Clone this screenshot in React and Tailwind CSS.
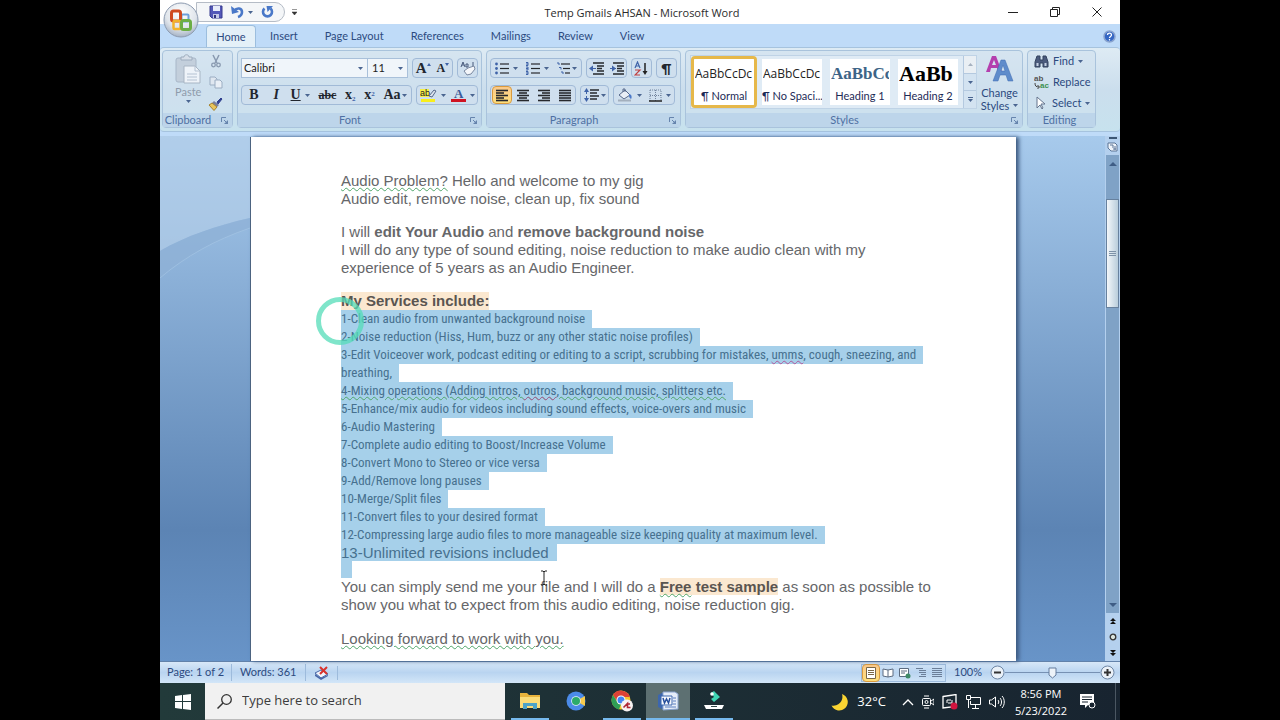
import { clsx } from 'clsx';
import { twMerge } from 'tailwind-merge';

const lineRows = {
  left: [12, 8, 12, 8, 12],
  center: [12, 8, 12, 8, 12],
  right: [12, 8, 12, 8, 12],
  justify: [12, 12, 12, 12, 12],
};

function Icon({ w = 16, h = 16, children, className }) {
  return (
    <svg width={w} height={h} viewBox={`0 0 ${w} ${h}`} fill="none" className={clsx('shrink-0', className)} aria-hidden="true">
      {children}
    </svg>
  );
}

function Caret({ className }) {
  return (
    <Icon w={5} h={3} className={className}>
      <path d="M0 0h5L2.5 3z" fill="#4a6591" />
    </Icon>
  );
}

function OfficeLogo() {
  return (
    <svg width="38" height="38" viewBox="0 0 38 38" aria-hidden="true">
      <defs>
        <radialGradient id="orb" cx="0.5" cy="0.3" r="0.75">
          <stop offset="0" stopColor="#ffffff" />
          <stop offset="0.6" stopColor="#e0e5eb" />
          <stop offset="1" stopColor="#9aa9bd" />
        </radialGradient>
      </defs>
      <circle cx="19" cy="19" r="17" fill="url(#orb)" stroke="#8d9bb0" />
      <g fill="none">
        <rect x="19.500" y="13.500" width="7" height="7" rx="1" stroke="#6d9fdb" strokeWidth="2" />
        <rect x="9.500" y="10" width="9" height="10" rx="2" stroke="#cf4a20" strokeWidth="3" />
        <rect x="11.500" y="20" width="7" height="8" rx="1" stroke="#f2b32c" strokeWidth="2.500" />
        <rect x="19.500" y="19.500" width="9" height="9" rx="2" stroke="#6cae45" strokeWidth="3" />
      </g>
    </svg>
  );
}

function SaveIcon() {
  return (
    <Icon w={14} h={14}>
      <path d="M1 1h12v12H3l-2-2z" fill="#5458b8" stroke="#373a8e" />
      <path d="M4 1h7v5H4z" fill="#e8ecfa" />
      <path d="M4 9h6v4H4z" fill="#c5c9e6" />
      <path d="M5 10h2v3H5z" fill="#32357f" />
    </Icon>
  );
}

function UndoIcon() {
  return (
    <Icon w={13} h={14}>
      <path d="M3 6c3-4 8-3 8 1 0 2-1 4-4 5" stroke="#4a78c8" strokeWidth="2.6" />
      <path d="M0 1l1 8 7-2z" fill="#4a78c8" />
    </Icon>
  );
}

function RedoIcon() {
  return (
    <Icon w={13} h={14}>
      <path d="M3.500 3.500a4.500 4.500 0 1 0 6 0" stroke="#4a78c8" strokeWidth="2.600" />
      <path d="M5.500 1H12l-5.500 6z" fill="#4a78c8" />
    </Icon>
  );
}

function PasteIcon() {
  return (
    <Icon w={26} h={30}>
      <rect x="1" y="4" width="20" height="24" rx="2" fill="#c3cfdc" stroke="#a8b7c8" />
      <path d="M6 6V3h3c0-3 5-3 5 0h3v3z" fill="#d6dfe9" stroke="#9dacbd" />
      <path d="M9 12h11l5 5v12H9z" fill="#eef3f9" stroke="#a8b5c4" />
      <path d="M20 12v5h5M12 20h10M12 23h10M12 26h10" stroke="#b5c2d2" />
    </Icon>
  );
}

function CutIcon() {
  return (
    <Icon w={12} h={14}>
      <path d="M3 1l4 8M9 1L5 9" stroke="#8899b0" strokeWidth="1.500" />
      <circle cx="3.500" cy="11" r="1.800" stroke="#8899b0" strokeWidth="1.300" />
      <circle cx="8.500" cy="11" r="1.800" stroke="#8899b0" strokeWidth="1.300" />
    </Icon>
  );
}

function CopyIcon() {
  return (
    <Icon w={14} h={13}>
      <path d="M1 1h5l2 2v6H1z" fill="#dfe7f0" stroke="#9badc2" />
      <path d="M6 4h5l2 2v6H6z" fill="#e9eff6" stroke="#9badc2" />
    </Icon>
  );
}

function BrushIcon() {
  return (
    <Icon w={15} h={14}>
      <path d="M9 5l4-4 1 1-4 5z" fill="#2f3f8f" stroke="#2f3f8f" />
      <path d="M6 4l5 4-2 2-5-4z" fill="#7a7f9c" />
      <path d="M1 8l3-2 5 4-3 3.500z" fill="#e9c55d" stroke="#a5812e" />
    </Icon>
  );
}

function Lines({ kind }) {
  return (
    <Icon w={14} h={13}>
      {lineRows[kind].map((len, i) => {
        const x = kind === 'right' ? 13 - len : kind === 'center' ? 7 - len / 2 : 1;
        return <path key={i} d={`M${x} ${1.5 + i * 2.5}h${len}`} stroke="#26282c" strokeWidth="1.6" />;
      })}
    </Icon>
  );
}

function ListIcon({ kind }) {
  return (
    <Icon w={14} h={13}>
      {[2, 6.5, 11].map((y, i) => (
        <g key={y}>
          <path d={`M${kind === 'multi' ? 4 + i * 2 : 5} ${y}h${kind === 'multi' ? 9 - i * 2 : 9}`} stroke="#26282c" strokeWidth="1.2" />
          {kind === 'bullet' && <circle cx="1.500" cy={y} r="1.400" fill="#3f63a8" />}
          {kind === 'number' && <path d={`M0 ${y - 1.5}h2v3h-2M0 ${y}h2`} stroke="#3f63a8" />}
          {kind === 'multi' && <path d={`M${i * 2} ${y - 1}h2v2`} stroke="#3f63a8" />}
        </g>
      ))}
    </Icon>
  );
}

function IndentIcon({ out }) {
  return (
    <Icon w={15} h={13}>
      <path d="M4 1h11M8 4h7M8 6.500h5M8 9h7M4 12h11" stroke="#26282c" strokeWidth="1.500" />
      <path d={out ? 'M0 6.500l4-3v6z' : 'M7 6.500l-4-3v6z'} fill="#3f63a8" />
      <path d="M1 6.500h6" stroke="#3f63a8" />
    </Icon>
  );
}

function SortIcon() {
  return (
    <Icon w={15} h={15}>
      <path d="M1 7l2.500-6L6 7M2 5h3" stroke="#3f63a8" strokeWidth="1.200" />
      <path d="M1 9h5l-5 5h5" stroke="#c04040" strokeWidth="1.200" />
      <path d="M11 2v9" stroke="#222" strokeWidth="1.500" />
      <path d="M8.500 10h5L11 14z" fill="#222" />
    </Icon>
  );
}

function SpacingIcon() {
  return (
    <Icon w={15} h={14}>
      <path d="M6 2h9M6 5h7M6 8h9M6 11h7" stroke="#26282c" strokeWidth="1.400" />
      <path d="M2.500 2v10" stroke="#3f63a8" strokeDasharray="4 2" />
      <path d="M0 4l2.500-4L5 4zM0 10h5l-2.500 4z" fill="#3f63a8" />
    </Icon>
  );
}

function BucketIcon() {
  return (
    <Icon w={16} h={14}>
      <path d="M2 7l6-5 5 5-6 4z" fill="#e8eef6" stroke="#56688a" />
      <path d="M6 4V1h2v3" stroke="#56688a" />
      <path d="M12 6c3 0 3 4 2 5-2-1-2-3-2-5z" fill="#4a78c8" />
      <path d="M1 12.500h13" stroke="#a3afbd" strokeWidth="2" />
    </Icon>
  );
}

function BorderIcon() {
  return (
    <Icon w={13} h={13}>
      <path d="M1 1h11v11M1 1v11M6.500 1v11M1 6.500h11" stroke="#71839c" strokeDasharray="1 1" />
      <path d="M0 12h13" stroke="#222" strokeWidth="1.500" />
    </Icon>
  );
}

function EraserIcon() {
  return (
    <Icon w={16} h={15}>
      <path d="M1 6l2-5 2 5M2 4h2M6 3v3h2V3zM13 1v5" stroke="#46587a" />
      <path d="M4 10l4-3 6-2 1 3-4 5-4 1z" fill="#f4f6fa" stroke="#7a88a0" />
    </Icon>
  );
}

function HighlightIcon() {
  return (
    <Icon w={17} h={15}>
      <path d="M0 1h9v8H0z" fill="#f5f04a" />
      <text x="0" y="8" fontSize="9" fontFamily="Liberation Sans" fill="#222">ab</text>
      <path d="M9 8l5-6 2 1-4 6z" fill="#dbe4ee" stroke="#56688a" />
      <path d="M1 12.500h14" stroke="#f8ee1c" strokeWidth="3" />
    </Icon>
  );
}

function FindIcon() {
  return (
    <Icon w={15} h={13}>
      <path d="M3 1h3v4h3V1h3l2 6v5H9V8H6v4H1V7z" fill="#4a5a7c" stroke="#33425f" />
      <path d="M2.500 8h2v3h-2zM10.500 8h2v3h-2z" fill="#c3d0e2" />
    </Icon>
  );
}

function ReplaceIcon() {
  return (
    <Icon w={15} h={14}>
      <text x="0" y="6" fontSize="8" fontWeight="700" fontFamily="Liberation Sans" fill="#555">ab</text>
      <text x="6" y="13" fontSize="8" fontWeight="700" fontFamily="Liberation Sans" fill="#3b9150">ac</text>
      <path d="M1 8c0 3 1 4 4 4M3.500 10l2 2-2 2" stroke="#444" />
    </Icon>
  );
}

function SelectIcon() {
  return (
    <Icon w={14} h={14}>
      <path d="M3 1v11l3-3 2 4 1-1-2-4h4z" fill="#fff" stroke="#65758e" />
    </Icon>
  );
}

function ChangeStylesIcon() {
  return (
    <Icon w={28} h={27}>
      <path d="M0 17L6 1h4l6 16h-4l-1-4H5l-1 4zM6 10h4L8 5z" fill="#b43fae" />
      <path d="M7 26L15 5h4l8 21h-5l-2-6h-6l-2 6zM15 16h4l-2-6z" fill="#5f8ccb" stroke="#3d6bb0" strokeWidth="0.500" />
    </Icon>
  );
}

function Launcher() {
  return (
    <Icon w={7} h={7}>
      <path d="M0.500 5V0.500H5M3 3l3 3" stroke="#6684ad" />
      <path d="M7 3v4H3z" fill="#6684ad" />
    </Icon>
  );
}

function Group({ label, launcher, className, children }) {
  return (
    <section className={clsx('flex flex-col rounded-sm border border-[#a9c3dc] bg-[#d0e1ef]/60', className)}>
      <div className="flex flex-1 flex-col">{children}</div>
      <div className="flex h-[14px] items-center bg-[#bdd5ea] pr-1 text-[#4e70a3]">
        <span className="flex-1 text-center text-[11px] leading-[14px]">{label}</span>
        {launcher && (
          <button aria-label={`${label} options`} className="ml-2">
            <Launcher />
          </button>
        )}
      </div>
    </section>
  );
}

function Tools({ className, children }) {
  return (
    <div className={clsx('flex h-5 shrink-0 items-center justify-around rounded-sm border border-[#a1bad7] bg-[#cfdfee]', className)}>
      {children}
    </div>
  );
}

function Tool({ label, drop, active, className, children }) {
  return (
    <button
      aria-label={label}
      className={twMerge(
        'flex h-[18px] items-center gap-1 px-0 leading-none text-[#22262e]',
        active && 'rounded-sm border border-[#d99a3e] bg-linear-to-b from-[#fbc98a] to-[#fddf7c]',
        className
      )}
    >
      {children}
      {drop && <Caret />}
    </button>
  );
}

function TitleBar() {
  return (
    <header className="relative flex h-6 items-center bg-white text-[#2b2b2b]">
      <button aria-label="Office" className="absolute top-[1px] left-[2px] z-10">
        <OfficeLogo />
      </button>
      <div className="ml-9 flex h-5 w-[89px] items-center gap-2 rounded-r-full border border-[#b5bcc6] bg-[#f4f6f8] pl-[12px]">
        <button aria-label="Save"><SaveIcon /></button>
        <button aria-label="Undo"><UndoIcon /></button>
        <Caret className="-ml-1" />
        <button aria-label="Redo"><RedoIcon /></button>
      </div>
      <button aria-label="Customize toolbar" className="ml-[7px]">
        <Icon w={5} h={6}>
          <path d="M0 0.500h5M0 3h5L2.500 6z" fill="#333" stroke="#333" strokeWidth="0.500" />
        </Icon>
      </button>
      <h1 className="absolute inset-x-0 pt-px pl-1 text-center font-['Open_Sans','Noto_Sans',sans-serif] text-[11px] leading-6">
        Temp Gmails AHSAN - Microsoft Word
      </h1>
      <div className="z-10 ml-auto flex items-center gap-8 pr-[18px]">
        <button aria-label="Minimize">
          <Icon w={10} h={10}><path d="M0 5.500h10" stroke="#222" /></Icon>
        </button>
        <button aria-label="Restore">
          <Icon w={10} h={10}><path d="M0.500 2.500h7v7h-7zM2.500 2.500v-2h7v7h-2" stroke="#222" /></Icon>
        </button>
        <button aria-label="Close">
          <Icon w={10} h={10}><path d="M0.500 0.500l9 9M9.500 0.500l-9 9" stroke="#222" /></Icon>
        </button>
      </div>
    </header>
  );
}

const tabs = ['Insert', 'Page Layout', 'References', 'Mailings', 'Review', 'View'];

function TabBar() {
  return (
    <nav className="flex h-[23px] items-end bg-[#bfdbf8] pl-[46px] text-[11px] leading-5 text-[#2c4a7f]">
      <button className="h-[22px] w-[50px] rounded-t-sm border border-b-0 border-[#9cbede] bg-[#e4f0f8]">Home</button>
      <div className="flex h-[22px] items-center gap-[27px] pl-[14px]">
        {tabs.map((t) => (
          <button key={t}>{t}</button>
        ))}
      </div>
      <button aria-label="Help" className="mr-1 mb-1 ml-auto">
        <Icon w={13} h={13}>
          <circle cx="6.500" cy="6.500" r="5.500" fill="#3567c4" stroke="#8aa4cf" strokeWidth="1.500" />
          <path d="M4.500 5c0-2.500 4-2.500 4 0 0 1.500-2 1.500-2 3M6.500 9v1.500" stroke="#fff" strokeWidth="1.300" />
        </Icon>
      </button>
    </nav>
  );
}

const styleCards = [
  { name: '¶ Normal', look: 'text-[12px] text-[#222]', sample: 'AaBbCcDc', active: true },
  { name: '¶ No Spaci...', look: 'text-[12px] text-[#222]', sample: 'AaBbCcDc' },
  { name: 'Heading 1', look: 'text-[17px] font-bold text-[#3d6487]', sample: 'AaBbCc', serif: true },
  { name: 'Heading 2', look: 'text-center text-[22px] font-bold text-black', sample: 'AaBb', serif: true },
];

function Ribbon() {
  return (
    <div className="flex h-[85px] gap-1 rounded-sm border-y border-[#a6c3de] bg-linear-to-b from-[#deebf4] via-[#cbdeed] to-[#c7e2ee] px-[2px] pt-[2px] pb-[3px] text-[11px] text-[#2c4a7f]">
      <Group label="Clipboard" launcher className="w-[71px]">
        <div className="flex justify-between pt-[3px] pr-[9px] pl-[12px]">
          <button className="flex flex-col items-center text-[#8f9bab]">
            <PasteIcon />
            <span className="leading-4">Paste</span>
            <Caret />
          </button>
          <div className="flex flex-col items-center gap-2">
            <button aria-label="Cut"><CutIcon /></button>
            <button aria-label="Copy"><CopyIcon /></button>
            <button aria-label="Format Painter"><BrushIcon /></button>
          </div>
        </div>
      </Group>

      <Group label="Font" launcher className="w-[245px]">
        <div className="flex gap-1 px-[3px] pt-[7px]">
          <div className="flex h-5 w-[167px] border border-[#a9c0da] bg-[#f0f5fa] text-[#222]">
            <label className="flex min-w-0 flex-1 items-center pr-1">
              <input aria-label="Font" className="w-full min-w-0 bg-transparent pl-[2px] outline-none" defaultValue="Calibri" />
              <Caret />
            </label>
            <label className="flex w-10 items-center border-l border-[#a9c0da] pr-1">
              <input aria-label="Font size" className="w-full min-w-0 bg-transparent pl-1 outline-none" defaultValue="11" />
              <Caret />
            </label>
          </div>
          <Tools className="w-[41px] font-['Liberation_Serif',serif] font-bold">
            <Tool label="Grow Font" className="text-[15px]">A<Icon w={4} h={10} className="-ml-1"><path d="M0 3h4L2 0z" fill="#3f63a8" /></Icon></Tool>
            <Tool label="Shrink Font" className="text-[12px]">A<Icon w={4} h={10} className="-ml-1"><path d="M0 0h4L2 3z" fill="#3f63a8" /></Icon></Tool>
          </Tools>
          <Tools className="w-[21px]">
            <Tool label="Clear Formatting"><EraserIcon /></Tool>
          </Tools>
        </div>
        <div className="flex gap-1 px-[3px] pt-[7px]">
          <Tools className="w-[171px] font-['Liberation_Serif',serif] text-[14px]">
            <Tool label="Bold" className="px-[3px] font-bold">B</Tool>
            <Tool label="Italic" className="px-[3px] font-bold italic">I</Tool>
            <Tool label="Underline" drop className="font-bold"><span className="underline">U</span></Tool>
            <Tool label="Strikethrough" className="text-[12px] font-bold"><span className="line-through">abc</span></Tool>
            <Tool label="Subscript" className="font-bold"><span>x<sub className="text-[7px] text-[#3f63a8]">2</sub></span></Tool>
            <Tool label="Superscript" className="font-bold"><span>x<sup className="text-[7px] text-[#3f63a8]">2</sup></span></Tool>
            <Tool label="Change Case" drop className="gap-px font-bold">Aa</Tool>
          </Tools>
          <Tools className="w-[62px]">
            <Tool label="Highlight" drop><HighlightIcon /></Tool>
            <Tool label="Font Color" drop>
              <Icon w={15} h={15}>
                <text x="3" y="10" fontSize="13" fontWeight="700" fontFamily="Liberation Serif" fill="#3b5998">A</text>
                <path d="M0 12.500h15" stroke="#cf1322" strokeWidth="3" />
              </Icon>
            </Tool>
          </Tools>
        </div>
      </Group>

      <Group label="Paragraph" launcher className="w-[195px]">
        <div className="flex justify-between px-[3px] pt-[7px]">
          <Tools className="w-[92px]">
            <Tool label="Bullets" drop><ListIcon kind="bullet" /></Tool>
            <Tool label="Numbering" drop><ListIcon kind="number" /></Tool>
            <Tool label="Multilevel List" drop className="gap-px"><ListIcon kind="multi" /></Tool>
          </Tools>
          <Tools className="w-[41px]">
            <Tool label="Decrease Indent"><IndentIcon out /></Tool>
            <Tool label="Increase Indent"><IndentIcon /></Tool>
          </Tools>
          <Tools className="w-[21px]">
            <Tool label="Sort"><SortIcon /></Tool>
          </Tools>
          <Tools className="w-[21px]">
            <Tool label="Show marks" className="text-[14px] font-bold">¶</Tool>
          </Tools>
        </div>
        <div className="flex gap-1 px-[3px] pt-[7px]">
          <Tools className="w-[86px]">
            <Tool label="Align Left" active className="px-[2px]"><Lines kind="left" /></Tool>
            <Tool label="Center" className="px-[3px]"><Lines kind="center" /></Tool>
            <Tool label="Align Right" className="px-[3px]"><Lines kind="right" /></Tool>
            <Tool label="Justify" className="px-[3px]"><Lines kind="justify" /></Tool>
          </Tools>
          <Tools className="w-[29px]">
            <Tool label="Line Spacing" drop className="gap-[2px]"><SpacingIcon /></Tool>
          </Tools>
          <Tools className="w-[62px]">
            <Tool label="Shading" drop><BucketIcon /></Tool>
            <Tool label="Borders" drop><BorderIcon /></Tool>
          </Tools>
        </div>
      </Group>

      <Group label="Styles" launcher className="w-[338px]">
        <div className="flex pt-1 pl-1">
          <div className="flex h-[54px] items-center gap-[2px] border border-[#bfd3e6] bg-[#dfebf5]">
            {styleCards.map((s) => (
              <button
                key={s.name}
                className={clsx(
                  'flex h-[52px] w-[66px] flex-col items-center overflow-hidden border-[3px]',
                  s.active ? 'rounded-sm border-[#e6b84a]' : 'border-transparent'
                )}
              >
                <span className="flex h-[46px] w-full flex-col bg-white">
                  <span
                    className={clsx(
                      'mx-px h-[29px] overflow-hidden text-left leading-[30px] whitespace-nowrap',
                      s.serif ? "font-['Liberation_Serif',serif]" : "font-['Open_Sans',sans-serif]",
                      s.look
                    )}
                  >
                    {s.sample}
                  </span>
                  <span className="text-[11px] leading-4 whitespace-nowrap text-[#1e2b57]">{s.name}</span>
                </span>
              </button>
            ))}
            <div className="flex h-full w-[13px] flex-col divide-y divide-[#b4c9df] border-l border-[#b4c9df] bg-[#d3e3f1]">
              <button aria-label="Scroll up" className="flex flex-1 items-center justify-center bg-[#e9eff4]">
                <Icon w={5} h={3}><path d="M0 3h5L2.500 0z" fill="#a5b1bf" /></Icon>
              </button>
              <button aria-label="Scroll down" className="flex flex-1 items-center justify-center"><Caret /></button>
              <button aria-label="More styles" className="flex flex-1 flex-col items-center justify-center gap-px">
                <span className="h-px w-[5px] bg-[#4a6591]" />
                <Caret />
              </button>
            </div>
          </div>
          <button className="flex flex-1 flex-col items-center leading-[13px]">
            <ChangeStylesIcon />
            <span className="pt-1">Change</span>
            <span className="flex items-center gap-1">Styles <Caret /></span>
          </button>
        </div>
      </Group>

      <Group label="Editing" className="w-[69px]">
        <div className="flex flex-col items-start gap-[5px] pt-[2px] pl-[6px] leading-4">
          <button className="flex items-center gap-1"><FindIcon />Find <Caret /></button>
          <button className="flex items-center gap-1"><ReplaceIcon />Replace</button>
          <button className="flex items-center gap-1"><SelectIcon />Select <Caret /></button>
        </div>
      </Group>
    </div>
  );
}

const services = [
  '1-Clean audio from unwanted background noise',
  '2-Noise reduction (Hiss, Hum, buzz or any other static noise profiles)',
  <>3-Edit Voiceover work, podcast editing or editing to a script, scrubbing for mistakes, <Spell>umms</Spell>, cough, sneezing, and</>,
  'breathing,',
  <Grammar key="mix">4-Mixing operations (Adding intros, <Spell>outros</Spell>, background music, splitters etc.</Grammar>,
  '5-Enhance/mix audio for videos including sound effects, voice-overs and music',
  '6-Audio Mastering',
  '7-Complete audio editing to Boost/Increase Volume',
  '8-Convert Mono to Stereo or vice versa',
  '9-Add/Remove long pauses',
  '10-Merge/Split files',
  '11-Convert files to your desired format',
  '12-Compressing large audio files to more manageable size keeping quality at maximum level.',
];

function Grammar({ children }) {
  return <span className="underline decoration-[#4fa66a] decoration-wavy decoration-1 underline-offset-1">{children}</span>;
}

function Spell({ children }) {
  return <span className="underline decoration-[#b0579a] decoration-wavy decoration-1 underline-offset-1">{children}</span>;
}

function Page() {
  return (
    <article className="h-full flex-1 overflow-hidden border-l border-[#4c6380] bg-white pt-[35px] pl-[90px] font-['Liberation_Sans',Arial,sans-serif] text-[15px] leading-[18px] whitespace-nowrap text-[#66676a] shadow-[3px_0_4px_#3d5a80]">
      <p><Grammar>Audio Problem?</Grammar> Hello and welcome to my gig</p>
      <p>Audio edit, remove noise, clean up, fix sound</p>
      <p className="pt-[15px]">I will <b>edit Your Audio</b> and <b>remove background noise</b></p>
      <p>I will do any type of sound editing, noise reduction to make audio clean with my</p>
      <p>experience of 5 years as an Audio Engineer.</p>
      <div className="relative pt-[15px]">
        <h2 className="w-fit bg-[#fbe8d0] font-bold text-[#5a5550]">My Services include:</h2>
        <span className="absolute top-5 -left-[25px] z-10 size-12 rounded-full border-[5px] border-[#54dcb8]/75" />
      </div>
      <ul className="font-['Liberation_Sans_Narrow','Roboto_Condensed',sans-serif] text-[13px] text-[#46708f]">
        {services.map((line, i) => (
          <li key={i} className="w-fit bg-[#a6d0ea] pr-[7px]">{line}</li>
        ))}
      </ul>
      <p className="w-fit bg-[#a6d0ea] pr-2 leading-[17px] text-[#46708f]">13-Unlimited revisions included</p>
      <div className="h-[17px] w-[11px] bg-[#a6d0ea]" />
      <div className="relative">
        <p>You can simply send me your file and I will do a <b className="bg-[#fbe8d0] text-[#5a5550]"><Grammar>Free</Grammar> test sample</b> as soon as possible to</p>
        <svg className="absolute -top-2 left-[199px]" width="8" height="16" viewBox="0 0 8 16" fill="none" aria-hidden="true">
          <path d="M1 1h2l1 1 1-1h2M4 2v12M1 15h2l1-1 1 1h2" stroke="#222" />
        </svg>
      </div>
      <p>show you what to expect from this audio editing, noise reduction gig.</p>
      <p className="pt-4"><Grammar>Looking forward to work with you.</Grammar></p>
    </article>
  );
}

function ScrollBar() {
  return (
    <div className="flex w-[15px] flex-col items-center bg-[#b4d0ee]">
      <div className="mt-px h-[2px] w-2 bg-[#3c5675]" />
      <Icon w={12} h={12} className="my-[2px]">
        <path d="M1 2h7l2 2v6H4L1 7z" fill="#eff4fa" stroke="#5b7596" />
        <path d="M3 4h3v3M6 8h3M8 5v4" stroke="#5b7596" />
      </Icon>
      <div className="flex w-[13px] flex-1 flex-col items-center bg-[#7fa2c6]">
        <button aria-label="Scroll page up" className="flex h-[18px] w-full items-center justify-center">
          <Icon w={8} h={4}><path d="M0 4h8L4 0z" fill="#3f5d85" /></Icon>
        </button>
        <div className="mt-[26px] flex h-[109px] w-full flex-col items-center justify-center gap-px border border-[#67819e] bg-linear-to-r from-[#f3f7fa] to-[#b9cddb]">
          <span className="h-px w-[7px] bg-[#7d92a8]" />
          <span className="h-px w-[7px] bg-[#7d92a8]" />
          <span className="h-px w-[7px] bg-[#7d92a8]" />
        </div>
        <button aria-label="Scroll page down" className="mt-auto flex h-4 w-full items-center justify-center">
          <Icon w={8} h={4}><path d="M0 0h8L4 4z" fill="#3f5d85" /></Icon>
        </button>
      </div>
      <div className="flex h-12 flex-col items-center justify-around">
        <button aria-label="Previous page">
          <Icon w={6} h={6}><path d="M0 3h6L3 0zM0 6h6L3 3z" fill="#111" /></Icon>
        </button>
        <button aria-label="Browse object">
          <Icon w={8} h={8}><circle cx="4" cy="4" r="2.800" fill="#d9e2dc" stroke="#333" strokeWidth="1.300" /></Icon>
        </button>
        <button aria-label="Next page">
          <Icon w={6} h={6}><path d="M0 0h6L3 3zM0 3h6L3 6z" fill="#111" /></Icon>
        </button>
      </div>
    </div>
  );
}

function Workspace() {
  return (
    <main className="flex min-h-0 flex-1 bg-linear-to-b from-[#a7caec] via-[#5c84b4] via-75% to-[#6894c8]">
      <div className="relative flex min-w-0 flex-1 pt-px pr-[89px] pl-[90px]">
        <svg className="absolute top-0 left-0" width="90" height="200" viewBox="0 0 90 200" aria-hidden="true">
          <path d="M0 0h90v82C55 90 26 100 0 115z" fill="#b7d1ea" opacity="0.6" />
          <path d="M0 115C26 100 55 90 90 82v10C55 104 26 120 0 142z" fill="#8fb1d6" opacity="0.7" />
          <path d="M0 142C26 120 55 104 90 92" fill="none" stroke="#a9c8e6" opacity="0.6" />
        </svg>
        <Page />
      </div>
      <ScrollBar />
    </main>
  );
}

function StatusBar() {
  return (
    <footer className="flex h-[22px] items-center border-t border-[#6282aa] bg-linear-to-b from-[#d8e8f8] via-[#b9d4f0] to-[#d3e6f8] text-[11px] text-[#2c4a7f]">
      <span className="border-r border-[#9dbbdc] px-[7px]">Page: 1 of 2</span>
      <span className="border-r border-[#9dbbdc] px-2">Words: 361</span>
      <button aria-label="Proofing errors" className="border-r border-[#9dbbdc] px-2">
        <Icon w={15} h={14}>
          <path d="M1 7l6-3 7 4-7 4z" fill="#f1f5fc" stroke="#4867a8" />
          <path d="M1 8l6 4 7-3v1l-7 4-6-4z" fill="#4867a8" />
          <path d="M6 1l7 7M13 1L6 8" stroke="#d9322c" strokeWidth="2" />
        </Icon>
      </button>
      <div className="ml-auto flex items-center">
        <div className="flex h-[18px] items-center border border-[#9dbbdc]">
          <Tool label="Print Layout" active className="px-[2px]">
            <Icon w={12} h={12}><path d="M1.500 0.500h9v11h-9zM3 3.500h6M3 5.500h6M3 7.500h6" fill="#fff" stroke="#7a6848" /></Icon>
          </Tool>
          <Tool label="Full Screen Reading" className="px-[2px]">
            <Icon w={12} h={12}><path d="M1 2l5 1 5-1v7l-5 1-5-1zM6 3v7" fill="#fff" stroke="#5c6b80" /></Icon>
          </Tool>
          <Tool label="Web Layout" className="px-[2px]">
            <Icon w={13} h={12}><path d="M1.500 1.500h9v8h-9zM3 4h6M3 6h4" fill="#fff" stroke="#5c6b80" /><circle cx="10" cy="9" r="2.500" fill="#3f8a68" /></Icon>
          </Tool>
          <Tool label="Outline" className="px-[2px]">
            <Icon w={12} h={12}><path d="M1 1.500h7M4 3.500h7M4 5.500h7M6 7.500h5M4 9.500h7" stroke="#6b7e98" /></Icon>
          </Tool>
          <Tool label="Draft" className="px-[2px]">
            <Icon w={12} h={12}><path d="M1 1.500h10M1 3.500h10M1 5.500h10M1 7.500h10M1 9.500h10" stroke="#6b7e98" /></Icon>
          </Tool>
        </div>
        <span className="px-2">100%</span>
        <button aria-label="Zoom out">
          <Icon w={15} h={15}><circle cx="7.500" cy="7.500" r="6.500" fill="#eaf1f8" stroke="#6e86a5" /><path d="M4 7.500h7" stroke="#333" strokeWidth="2" /></Icon>
        </button>
        <div className="relative flex w-[95px] items-center justify-center">
          <span className="absolute inset-x-0 h-px bg-[#7791b3]" />
          <Icon w={9} h={12} className="relative"><path d="M1 1h7v7l-3.500 3L1 8z" fill="#edf3f9" stroke="#647d9f" /></Icon>
        </div>
        <button aria-label="Zoom in" className="pr-[5px]">
          <Icon w={15} h={15}><circle cx="7.500" cy="7.500" r="6.500" fill="#eaf1f8" stroke="#6e86a5" /><path d="M4 7.500h7M7.500 4v7" stroke="#333" strokeWidth="2" /></Icon>
        </button>
      </div>
    </footer>
  );
}

function TaskButton({ label, active, open, children }) {
  return (
    <button
      aria-label={label}
      className={clsx(
        'flex h-full items-center justify-center border-b-2',
        active ? 'mx-px w-11 bg-[#5d7072]' : 'mx-1 w-[38px]',
        open ? 'border-[#76b9ed]' : 'border-transparent'
      )}
    >
      {children}
    </button>
  );
}

function TaskBar() {
  return (
    <footer className="flex h-[37px] items-center bg-linear-to-r from-[#223a3a] to-[#182430] font-['Open_Sans','Noto_Sans',sans-serif] text-white">
      <button aria-label="Start" className="flex w-[45px] justify-center">
        <Icon w={16} h={16}><path d="M0 2l7-1v6H0zM8 1l8-1v7H8zM0 8h7v7l-7-1zM8 8h8v8l-8-1z" fill="#fff" /></Icon>
      </button>
      <label className="flex h-full w-[300px] items-center gap-[10px] border-b border-[#bbb] bg-[#f1f1f1] px-3 text-[#3c3c3c]">
        <Icon w={15} h={15}><circle cx="9.500" cy="5.500" r="4.800" stroke="#333" strokeWidth="1.300" /><path d="M6 9l-5.500 5.500" stroke="#333" strokeWidth="1.500" /></Icon>
        <input aria-label="Search" placeholder="Type here to search" className="min-w-0 flex-1 bg-transparent text-[13px] outline-none placeholder:text-[#3c3c3c]" />
      </label>
      <div className="flex h-full pl-[2px]">
        <TaskButton label="File Explorer" open>
          <Icon w={20} h={18}>
            <path d="M0 1h7l2 2h11v13H0z" fill="#e8b33c" />
            <path d="M0 5h20v11H0z" fill="#fbdc79" />
            <path d="M3 17v-6h14v6h-4v-3H7v3z" fill="#4da3c9" />
          </Icon>
        </TaskButton>
        <TaskButton label="Browser">
          <Icon w={20} h={20}>
            <circle cx="10" cy="10" r="9.500" fill="#4b8be8" />
            <path d="M10 10l9-5v10z" fill="#f7cb4d" />
            <circle cx="10" cy="10" r="4.800" fill="#e9f2fb" />
            <circle cx="10" cy="10" r="4" fill="#2cab6a" />
          </Icon>
        </TaskButton>
        <TaskButton label="Chrome" open>
          <Icon w={23} h={22}>
            <circle cx="10" cy="10" r="9.500" fill="#f5c72f" />
            <path d="M2 5a9.500 9.500 0 0 1 17 2H10a4 4 0 0 0-4 4z" fill="#dc4237" />
            <path d="M2 5l5 8 3 1-2 5.500A9.500 9.500 0 0 1 2 5z" fill="#2f9e56" />
            <circle cx="10" cy="10" r="4.500" fill="#fff" />
            <circle cx="10" cy="10" r="3.500" fill="#4285f4" />
            <circle cx="16" cy="15.500" r="6" fill="#f6f2f2" />
            <path d="M12.500 17.500l4-4v4h3M17 14h2" stroke="#b02734" strokeWidth="1.600" />
          </Icon>
        </TaskButton>
        <TaskButton label="Word" active open>
          <Icon w={22} h={20}>
            <path d="M1 4l6-3v18l-6-3z" fill="#3c66ae" />
            <path d="M6 1h12l3 2v15l-15 1z" fill="#e6edf8" stroke="#8aa4d0" />
            <path d="M4 5h11v9H4z" fill="#f7f9fd" stroke="#3c66ae" />
            <path d="M6 7l1.500 5L9.500 8l2 4L13 7" stroke="#284f9c" strokeWidth="1.500" />
            <path d="M16 7h3M16 10h3M16 13h3M8 16h11" stroke="#5b7fc0" />
          </Icon>
        </TaskButton>
        <TaskButton label="Filmora" open>
          <Icon w={20} h={20}>
            <path d="M7 2l3-2 6 6-6 5-3-3 3-2z" fill="#3fd5b4" />
            <circle cx="8" cy="3" r="1.800" fill="#fff" />
            <path d="M0 14h20l-2 4H2z" fill="#fff" />
            <path d="M7 15.500h6" stroke="#33474a" />
          </Icon>
        </TaskButton>
      </div>
      <div className="ml-auto flex h-full items-center">
        <Icon w={18} h={18}><path d="M11 1a8.500 8.500 0 1 1-10.500 11.500A9 9 0 0 0 11 1z" fill="#fbd532" /></Icon>
        <span className="pr-4 pl-2 text-[13px]">32°C</span>
        <div className="flex items-center gap-2">
          <Icon w={12} h={8}><path d="M1 7l5-5 5 5" stroke="#fff" strokeWidth="1.300" /></Icon>
          <Icon w={12} h={14}><rect x="0.500" y="3.500" width="8" height="7" rx="1" stroke="#fff" /><path d="M9 6l3-2v6L9 8M2 1h5M2 13h5" stroke="#fff" /><circle cx="4.500" cy="7" r="1.500" stroke="#fff" /></Icon>
          <Icon w={16} h={16}><path d="M1 2.500l13-2v12L1 14z" stroke="#fff" strokeWidth="1.300" /><path d="M5 9V6h4M10 6v3H6" stroke="#fff" /><circle cx="12" cy="12" r="3.500" fill="#d3153f" /></Icon>
          <Icon w={15} h={14}><path d="M5 2.500h9.500v7H4.500V6M9.500 10v3M6 13.500h7M0.500 0.500h4v4h-4zM2.500 5v8" stroke="#fff" /></Icon>
          <Icon w={16} h={14}><path d="M0.500 5v4h2l4 3V2l-4 3zM9 5c1 1 1 3 0 4M11 3c2 2 2 6 0 8M13 1c3 3 3 9 0 12" stroke="#fff" /></Icon>
        </div>
        <div className="pr-3 pl-[10px] text-center text-[11px] leading-[17px]">
          <div>8:56 PM</div>
          <div>5/23/2022</div>
        </div>
        <Icon w={17} h={17}>
          <path d="M1 1h14v11H9l-3 3v-3H1z" fill="#fff" />
          <path d="M3 4h10M3 6.500h10M3 9h6" stroke="#182430" />
          <circle cx="13" cy="12" r="3" fill="#182430" stroke="#fff" />
        </Icon>
        <span className="ml-[19px] h-full border-l border-[#4b5762] pl-1" />
      </div>
    </footer>
  );
}

export default function App() {
  return (
    <div className="flex h-screen justify-center overflow-hidden bg-black font-['Lato','Open_Sans',sans-serif]">
      <div className="flex w-3/4 flex-col">
        <TitleBar />
        <TabBar />
        <div className="bg-[#bfdbf8] pb-1">
          <Ribbon />
        </div>
        <Workspace />
        <StatusBar />
        <TaskBar />
      </div>
    </div>
  );
}
